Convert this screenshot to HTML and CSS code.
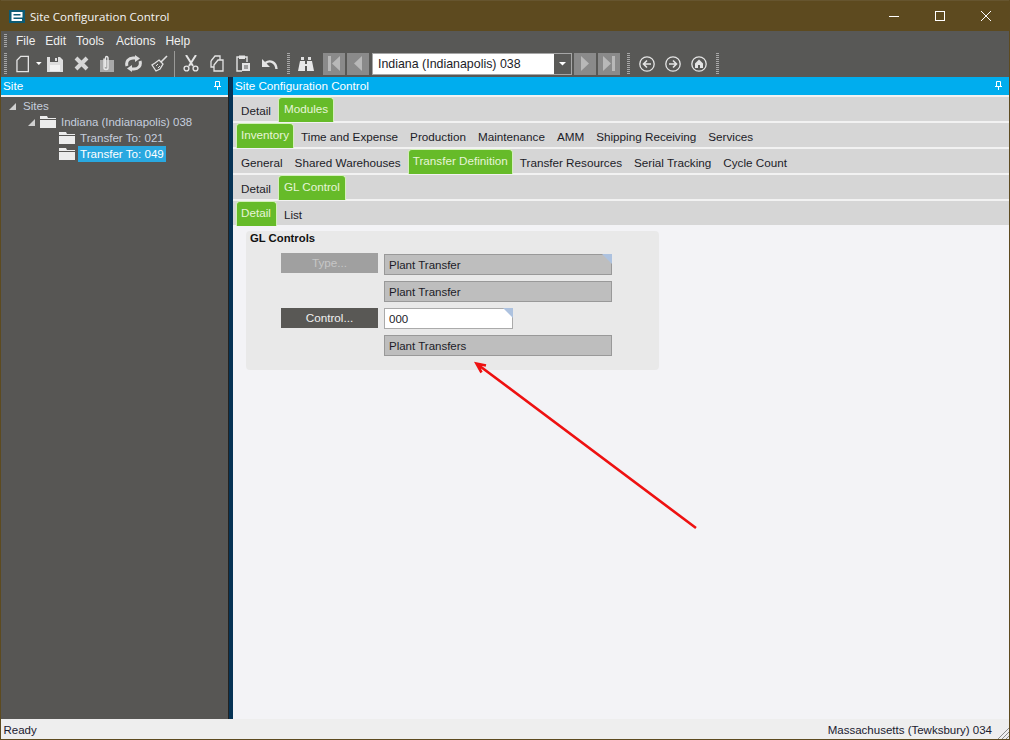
FILE: index.html
```html
<!DOCTYPE html>
<html lang="en">
<head>
    <meta charset="UTF-8">
    <title>Site Configuration Control</title>
    <link rel="stylesheet" href="styles.css">
</head>
<body>
    <div class="window">
        <div class="titlebar">
            <div class="app-logo"><svg width="16" height="13" viewBox="0 0 16 13"><rect width="16" height="13" fill="#0d5b73"/><path d="M3.500 6.500H12.500V3H3.500V10H13" fill="none" stroke="#fff" stroke-width="2"/></svg></div>
            <div class="title-text">Site Configuration Control</div>
            <div class="win-buttons">
                <svg class="win-btn" width="46" height="30" viewBox="0 0 46 30"><path d="M18 15.500H28" stroke="#fff" fill="none"/></svg>
                <svg class="win-btn" width="46" height="30" viewBox="0 0 46 30"><rect x="18.500" y="10.500" width="9" height="9" stroke="#fff" fill="none"/></svg>
                <svg class="win-btn" width="46" height="30" viewBox="0 0 46 30"><path d="M18 10L28 20M28 10L18 20" stroke="#fff" fill="none"/></svg>
            </div>
        </div>

        <div class="menubar">
            <div class="grip grip-menu"></div>
            <span class="menu-item">File</span>
            <span class="menu-item">Edit</span>
            <span class="menu-item menu-tools">Tools</span>
            <span class="menu-item">Actions</span>
            <span class="menu-item">Help</span>
        </div>

        <div class="toolbar">
            <div class="grip"></div>
            <div class="tool tool-new">
                <svg width="14" height="18" viewBox="0 0 14 18"><path d="M5 1H13V17H1V5Z" fill="none" stroke="#e4e4e4" stroke-width="1.400"/></svg>
                <svg class="drop" width="6" height="4" viewBox="0 0 6 4"><path d="M0 0H6L3 3Z" fill="#fff"/></svg>
            </div>
            <div class="tool"><svg width="16" height="16" viewBox="0 0 16 16"><path d="M0 1H13L16 4V16H0Z" fill="#dedede"/><path d="M3 1H11V6H3Z" fill="#575756"/><path d="M8 2H10V5H8Z" fill="#dedede"/><path d="M3 9H13V15H3Z" fill="#f2f2f2"/></svg></div>
            <div class="tool"><svg width="15" height="15" viewBox="0 0 15 15"><path d="M2 2L13 13M13 2L2 13" stroke="#d6d6d6" stroke-width="4"/></svg></div>
            <div class="tool"><svg width="16" height="18" viewBox="0 0 16 18"><path d="M1 5H15V17H1Z" fill="#a8a8a8"/><path d="M5 3.500V13C5 15 9 15 9 13V3C9 1 6.500 1 6.500 3V12" fill="none" stroke="#e8e8e8" stroke-width="1.400"/></svg></div>
            <div class="tool"><svg width="17" height="17" viewBox="0 0 17 17"><path d="M2 11C0.500 6 4 3 8 3H10" fill="none" stroke="#dcdcdc" stroke-width="3"/><path d="M10 0L15 3.500L10 7Z" fill="#dcdcdc"/><path d="M15 6C16.500 11 13 14 9 14H7" fill="none" stroke="#dcdcdc" stroke-width="3"/><path d="M7 10L2 13.500L7 17Z" fill="#dcdcdc"/></svg></div>
            <div class="tool"><svg width="17" height="17" viewBox="0 0 17 17"><path d="M16 1L10 7" stroke="#e2e2e2" stroke-width="1.600"/><path d="M8 5L12 9L9 14L5 16L1 10L4 8Z" fill="none" stroke="#e2e2e2" stroke-width="1.300"/><path d="M5 11L7 9M7 13L9 11" stroke="#e2e2e2"/></svg></div>
            <div class="tool-sep"></div>
            <div class="tool"><svg width="16" height="17" viewBox="0 0 16 17"><path d="M3 0L10 11M13 0L6 11" stroke="#e4e4e4" stroke-width="2"/><circle cx="3.500" cy="13.500" r="2.400" fill="none" stroke="#e4e4e4" stroke-width="1.400"/><circle cx="12.500" cy="13.500" r="2.400" fill="none" stroke="#e4e4e4" stroke-width="1.400"/></svg></div>
            <div class="tool"><svg width="14" height="17" viewBox="0 0 14 17"><path d="M1 6L5 1H10V5" fill="none" stroke="#e4e4e4" stroke-width="1.300"/><path d="M1 6V12H4" fill="none" stroke="#e4e4e4" stroke-width="1.300"/><path d="M4 10L8 5H13V16H4Z" fill="none" stroke="#e4e4e4" stroke-width="1.300"/></svg></div>
            <div class="tool"><svg width="14" height="17" viewBox="0 0 14 17"><path d="M3 2H1V16H6M9 2H11V7" fill="none" stroke="#e4e4e4" stroke-width="1.400"/><path d="M3 0.500H9V4H3Z" fill="#e4e4e4"/><path d="M6 8H14V16H6Z" fill="#e4e4e4"/><path d="M8 11H12M8 13H12" stroke="#575756"/></svg></div>
            <div class="tool"><svg width="17" height="13" viewBox="0 0 17 13"><path d="M15.500 12C15 5 9 2.500 4.500 6" fill="none" stroke="#e4e4e4" stroke-width="2.400"/><path d="M1 2V10H9Z" fill="#e4e4e4"/></svg></div>
            <div class="grip grip-gap"></div>
            <div class="tool tool-find"><svg width="16" height="16" viewBox="0 0 16 16"><path d="M3 1H6V4H3ZM10 1H13V4H10Z" fill="#e0e0e0"/><path d="M2 5H7V8H9V5H14L16 15H9V10H7V15H0Z" fill="#e8e8e8"/></svg></div>
            <div class="nav-btn nav-first"><svg width="14" height="15" viewBox="0 0 14 15"><path d="M1 0H4V15H1ZM13 0V15L5 7.500Z" fill="#b8b8b8"/></svg></div>
            <div class="nav-btn"><svg width="10" height="15" viewBox="0 0 10 15"><path d="M9 0V15L1 7.500Z" fill="#b8b8b8"/></svg></div>
            <div class="combo">
                <div class="combo-text">Indiana (Indianapolis) 038</div>
                <div class="combo-arrow"><svg width="7" height="4" viewBox="0 0 7 4"><path d="M0 0H7L3.500 3.500Z" fill="#fff"/></svg></div>
            </div>
            <div class="nav-btn"><svg width="10" height="15" viewBox="0 0 10 15"><path d="M1 0V15L9 7.500Z" fill="#b8b8b8"/></svg></div>
            <div class="nav-btn nav-last"><svg width="14" height="15" viewBox="0 0 14 15"><path d="M10 0H13V15H10ZM1 0V15L9 7.500Z" fill="#b8b8b8"/></svg></div>
            <div class="grip grip-nav"></div>
            <div class="tool"><svg width="16" height="16" viewBox="0 0 16 16"><circle cx="8" cy="8" r="7.200" fill="none" stroke="#e4e4e4" stroke-width="1.300"/><path d="M12 8H5M8 4.500L4.500 8L8 11.500" fill="none" stroke="#e4e4e4" stroke-width="1.600"/></svg></div>
            <div class="tool"><svg width="16" height="16" viewBox="0 0 16 16"><circle cx="8" cy="8" r="7.200" fill="none" stroke="#e4e4e4" stroke-width="1.300"/><path d="M4 8H11M8 4.500L11.500 8L8 11.500" fill="none" stroke="#e4e4e4" stroke-width="1.600"/></svg></div>
            <div class="tool"><svg width="16" height="16" viewBox="0 0 16 16"><circle cx="8" cy="8" r="7.200" fill="none" stroke="#e4e4e4" stroke-width="1.300"/><path d="M8 3.500L12 7.500V12H9V9H7V12H4V7.500Z" fill="#e4e4e4"/></svg></div>
            <div class="grip grip-end"></div>
        </div>

        <div class="main">
            <div class="side">
                <div class="pane-head">
                    <span>Site</span>
                    <svg class="pin" width="7" height="9" viewBox="0 0 7 9"><path d="M1.500 .5H5.500V5.500H1.500ZM0 5.500H7M3.500 5.500V9" fill="none" stroke="#fff"/></svg>
                </div>
                <div class="tree">
                    <div class="tree-row level-0">
                        <svg class="twist" width="7" height="7" viewBox="0 0 7 7"><path d="M7 0V7H0Z" fill="#d0d0d0"/></svg>
                        <span class="node-text">Sites</span>
                    </div>
                    <div class="tree-row level-1">
                        <svg class="twist" width="7" height="7" viewBox="0 0 7 7"><path d="M7 0V7H0Z" fill="#d0d0d0"/></svg>
                        <svg class="folder" width="16" height="12" viewBox="0 0 16 12"><path d="M0 0H7L8 2H16V3H0ZM0 4H16V12H0Z" fill="#ececec"/></svg>
                        <span class="node-text">Indiana (Indianapolis) 038</span>
                    </div>
                    <div class="tree-row level-2">
                        <svg class="folder" width="16" height="12" viewBox="0 0 16 12"><path d="M0 0H7L8 2H16V3H0ZM0 4H16V12H0Z" fill="#ececec"/></svg>
                        <span class="node-text">Transfer To: 021</span>
                    </div>
                    <div class="tree-row level-2">
                        <svg class="folder" width="16" height="12" viewBox="0 0 16 12"><path d="M0 0H7L8 2H16V3H0ZM0 4H16V12H0Z" fill="#ececec"/></svg>
                        <span class="node-text selected">Transfer To: 049</span>
                    </div>
                </div>
            </div>

            <div class="splitter"></div>

            <div class="content">
                <div class="pane-head">
                    <span>Site Configuration Control</span>
                    <svg class="pin" width="7" height="9" viewBox="0 0 7 9"><path d="M1.500 .5H5.500V5.500H1.500ZM0 5.500H7M3.500 5.500V9" fill="none" stroke="#fff"/></svg>
                </div>
                <div class="tabs">
                    <div class="tab-row">
                        <div class="tab tab-detail">Detail</div>
                        <div class="tab active tab-wide">Modules</div>
                    </div>
                    <div class="tab-row">
                        <div class="tab active">Inventory</div>
                        <div class="tab">Time and Expense</div>
                        <div class="tab">Production</div>
                        <div class="tab">Maintenance</div>
                        <div class="tab">AMM</div>
                        <div class="tab">Shipping Receiving</div>
                        <div class="tab">Services</div>
                    </div>
                    <div class="tab-row">
                        <div class="tab">General</div>
                        <div class="tab">Shared Warehouses</div>
                        <div class="tab active">Transfer Definition</div>
                        <div class="tab">Transfer Resources</div>
                        <div class="tab">Serial Tracking</div>
                        <div class="tab">Cycle Count</div>
                    </div>
                    <div class="tab-row">
                        <div class="tab tab-detail">Detail</div>
                        <div class="tab active tab-wide">GL Control</div>
                    </div>
                    <div class="tab-row">
                        <div class="tab active tab-detail">Detail</div>
                        <div class="tab">List</div>
                    </div>
                </div>

                <div class="page">
                    <div class="group">
                        <div class="group-title">GL Controls</div>
                        <div class="form-row">
                            <div class="form-btn disabled">Type...</div>
                            <div class="field corner">Plant Transfer</div>
                        </div>
                        <div class="form-row">
                            <div class="form-spacer"></div>
                            <div class="field">Plant Transfer</div>
                        </div>
                        <div class="form-row">
                            <div class="form-btn">Control...</div>
                            <div class="field field-input corner">000</div>
                        </div>
                        <div class="form-row">
                            <div class="form-spacer"></div>
                            <div class="field">Plant Transfers</div>
                        </div>
                    </div>
                </div>
            </div>
        </div>

        <div class="statusbar">
            <span>Ready</span>
            <span class="status-site">Massachusetts (Tewksbury) 034</span>
            <svg class="resize" width="11" height="11" viewBox="0 0 11 11"><path d="M0 11L11 0M4 11L11 4M8 11L11 8" stroke="#8a8a8a" fill="none"/></svg>
        </div>

        <svg class="annotation" width="1010" height="740" viewBox="0 0 1010 740">
            <path d="M696 528L477 364M486 365.500L476.500 363.500L481.500 372.500" fill="none" stroke="#ee1111" stroke-width="2.600"/>
        </svg>
    </div>
</body>
</html>
```

FILE: styles.css
```css
* {
    box-sizing: border-box;
}
body {
    margin: 0;
    font-family: "Liberation Sans", Arial, sans-serif;
    font-size: 11.7px;
    color: #1c1c28;
}
.window {
    position: relative;
    width: 1010px;
    height: 740px;
    display: flex;
    flex-direction: column;
    border: 1px solid #5d4a1f;
    border-top-width: 0;
    background: #585856;
}
.titlebar {
    height: 31px;
    background: #5d4a1f;
    border-top: 1px solid #66552f;
    display: flex;
    align-items: center;
    color: #f4f4f4;
}
.app-logo {
    display: flex;
    margin-left: 8px;
}
.title-text {
    margin-left: 5px;
    font-family: "Open Sans", sans-serif;
    font-size: 11.55px;
}
.win-buttons {
    margin-left: auto;
    display: flex;
}
.win-btn {
    display: block;
}
.menubar {
    height: 19px;
    display: flex;
    align-items: center;
    color: #f0f0f0;
    font-size: 12px;
}
.menu-item {
    margin-right: 10px;
}
.menu-tools {
    margin-right: 12px;
}
.grip {
    width: 3px;
    height: 21px;
    background: repeating-linear-gradient(to bottom, #a8a8a8 0, #a8a8a8 1px, transparent 1px, transparent 2px);
}
.grip-menu {
    height: 13px;
    margin: 0 9px 0 3px;
}
.toolbar {
    height: 27px;
    display: flex;
    align-items: center;
    padding-left: 3px;
}
.tool {
    width: 26px;
    height: 24px;
    display: flex;
    align-items: center;
    justify-content: center;
    flex-shrink: 0;
}
.tool-new {
    width: 30px;
    margin-left: 5px;
    justify-content: flex-start;
    padding-left: 4px;
}
.drop {
    margin-left: 7px;
}
.tool-sep {
    width: 1px;
    height: 26px;
    margin: 0 3px 0 2px;
    background: #9a9a98;
}
.grip-gap {
    margin: 0 3px 0 5px;
}
.nav-btn {
    width: 22px;
    height: 22px;
    margin-right: 2px;
    background: #8a8a8a;
    display: flex;
    align-items: center;
    justify-content: center;
}
.nav-first {
    margin-left: 4px;
}
.combo {
    width: 200px;
    height: 22px;
    margin: 0 2px 0 1px;
    display: flex;
    background: #fff;
    border: 1px solid #a6a6a6;
}
.combo-text {
    flex: 1;
    padding-left: 5px;
    line-height: 20px;
    font-size: 12.4px;
}
.combo-arrow {
    width: 17px;
    background: #5a5a58;
    display: flex;
    align-items: center;
    justify-content: center;
}
.grip-nav {
    margin: 0 4px 0 5px;
}
.grip-end {
    margin-left: 4px;
}
.main {
    flex: 1;
    display: flex;
    min-height: 0;
}
.side {
    width: 227px;
    background: #575654;
}
.splitter {
    width: 5px;
    background: #063355;
    border-left: 1px solid #222;
}
.content {
    flex: 1;
    display: flex;
    flex-direction: column;
    background: #f3f3f6;
}
.pane-head {
    height: 20px;
    background: #00adee;
    border-bottom: 2px solid #f2f2f2;
    color: #fff;
    display: flex;
    align-items: center;
    justify-content: space-between;
    padding: 0 7px 1px 2px;
}
.pin {
    display: block;
}
.tree {
    padding-top: 1px;
    font-size: 11.6px;
}
.tree-row {
    height: 16px;
    display: flex;
    align-items: center;
    color: #c6cede;
    white-space: nowrap;
}
.level-0 {
    padding-left: 8px;
}
.level-0 .node-text {
    margin-left: 5px;
}
.level-1 {
    padding-left: 27px;
    font-size: 11.4px;
}
.level-1 .folder {
    margin: 0 3px 0 5px;
}
.level-2 {
    padding-left: 58px;
}
.level-2 .folder {
    margin-right: 3px;
}
.node-text {
    height: 16px;
    line-height: 16px;
    padding: 0 2px;
}
.selected {
    width: 88px;
    background: #29a8e0;
    color: #fff;
}
.tabs {
    display: flex;
    flex-direction: column;
    gap: 2px;
    background: #f2f2f2;
}
.tab-row {
    height: 24px;
    display: flex;
    padding-left: 2px;
    background: #d6d6d6;
}
.tab {
    margin: 0 1px;
    padding: 6px 5px 0;
    line-height: 16px;
    white-space: nowrap;
}
.tab-detail {
    padding-right: 5px;
}
.tab.active {
    height: 25px;
    padding: 3px 4px 0;
    border: 1px solid #d4f0bc;
    border-bottom: none;
    border-radius: 4px 4px 0 0;
    background: #66bb29;
    color: #e6f5d8;
    z-index: 1;
}
.tab.active.tab-detail {
    padding-right: 5px;
}
.tab.active.tab-wide {
    padding-left: 5px;
    padding-right: 5px;
}
.page {
    flex: 1;
    padding: 6px 0 0 13px;
}
.group {
    width: 413px;
    height: 139px;
    padding: 1px 0 0 35px;
    background: #e9e9e9;
    border-radius: 4px;
}
.group-title {
    margin-left: -31px;
    height: 22px;
    line-height: 12px;
    font-size: 11.3px;
    font-weight: bold;
    color: #111;
}
.form-row {
    display: flex;
    gap: 6px;
    margin-bottom: 6px;
}
.form-btn {
    width: 97px;
    height: 20px;
    background: #595855;
    color: #f0f0f0;
    text-align: center;
    line-height: 20px;
}
.form-btn.disabled {
    margin-top: -1px;
    background: #a0a0a0;
    color: #c6c6c6;
}
.form-spacer {
    width: 97px;
}
.field {
    position: relative;
    width: 228px;
    height: 21px;
    padding-left: 4px;
    line-height: 20px;
    font-size: 11.5px;
    background: #bebebe;
    border: 1px solid #999;
}
.field-input {
    width: 129px;
    background: #fff;
    border-color: #aaa;
}
.corner::after {
    content: "";
    position: absolute;
    top: -1px;
    right: -1px;
    border-style: solid;
    border-width: 0 10px 10px 0;
    border-color: transparent #adc2df transparent transparent;
}
.statusbar {
    position: relative;
    height: 20px;
    background: #eeeeee;
    display: flex;
    align-items: center;
    justify-content: space-between;
    padding: 2px 17px 0 2.5px;
    color: #20202e;
    font-size: 11.5px;
}
.resize {
    position: absolute;
    right: 0;
    bottom: 0;
}
.annotation {
    position: absolute;
    top: 0;
    left: -1px;
    pointer-events: none;
}
```
